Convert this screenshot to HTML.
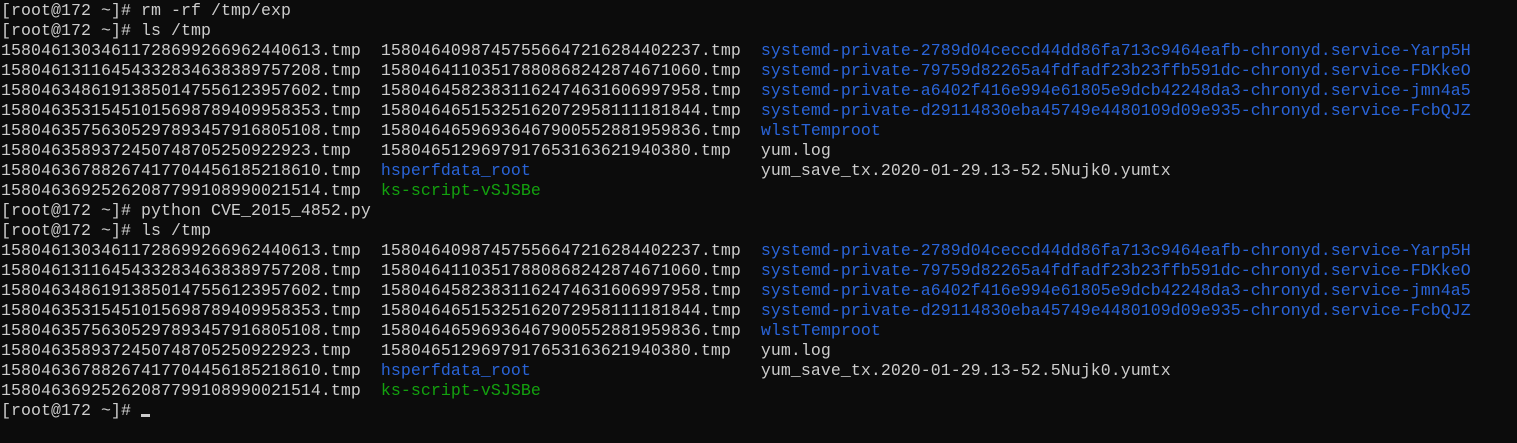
<!DOCTYPE html>
<html><head><meta charset="utf-8"><style>
html,body{margin:0;padding:0;background:#0c0c0c;width:1517px;height:443px;overflow:hidden}
pre{margin:0;position:absolute;left:1px;top:1px;font-family:"Liberation Mono",monospace;font-size:16.6px;line-height:20px;color:#cccccc;letter-spacing:0.04px}
.b{color:#2a64d8}.g{color:#13a10e}
.c{display:inline-block;width:9px;height:3px;background:#ccc;vertical-align:baseline;margin-bottom:-2px}
</style></head><body><pre>[root@172 ~]# rm -rf /tmp/exp
[root@172 ~]# ls /tmp
15804613034611728699266962440613.tmp  15804640987457556647216284402237.tmp  <span class="b">systemd-private-2789d04ceccd44dd86fa713c9464eafb-chronyd.service-Yarp5H</span>
15804613116454332834638389757208.tmp  15804641103517880868242874671060.tmp  <span class="b">systemd-private-79759d82265a4fdfadf23b23ffb591dc-chronyd.service-FDKkeO</span>
15804634861913850147556123957602.tmp  15804645823831162474631606997958.tmp  <span class="b">systemd-private-a6402f416e994e61805e9dcb42248da3-chronyd.service-jmn4a5</span>
15804635315451015698789409958353.tmp  15804646515325162072958111181844.tmp  <span class="b">systemd-private-d29114830eba45749e4480109d09e935-chronyd.service-FcbQJZ</span>
15804635756305297893457916805108.tmp  15804646596936467900552881959836.tmp  <span class="b">wlstTemproot</span>
1580463589372450748705250922923.tmp   1580465129697917653163621940380.tmp   yum.log
15804636788267417704456185218610.tmp  <span class="b">hsperfdata_root</span>                       yum_save_tx.2020-01-29.13-52.5Nujk0.yumtx
15804636925262087799108990021514.tmp  <span class="g">ks-script-vSJSBe</span>
[root@172 ~]# python CVE_2015_4852.py
[root@172 ~]# ls /tmp
15804613034611728699266962440613.tmp  15804640987457556647216284402237.tmp  <span class="b">systemd-private-2789d04ceccd44dd86fa713c9464eafb-chronyd.service-Yarp5H</span>
15804613116454332834638389757208.tmp  15804641103517880868242874671060.tmp  <span class="b">systemd-private-79759d82265a4fdfadf23b23ffb591dc-chronyd.service-FDKkeO</span>
15804634861913850147556123957602.tmp  15804645823831162474631606997958.tmp  <span class="b">systemd-private-a6402f416e994e61805e9dcb42248da3-chronyd.service-jmn4a5</span>
15804635315451015698789409958353.tmp  15804646515325162072958111181844.tmp  <span class="b">systemd-private-d29114830eba45749e4480109d09e935-chronyd.service-FcbQJZ</span>
15804635756305297893457916805108.tmp  15804646596936467900552881959836.tmp  <span class="b">wlstTemproot</span>
1580463589372450748705250922923.tmp   1580465129697917653163621940380.tmp   yum.log
15804636788267417704456185218610.tmp  <span class="b">hsperfdata_root</span>                       yum_save_tx.2020-01-29.13-52.5Nujk0.yumtx
15804636925262087799108990021514.tmp  <span class="g">ks-script-vSJSBe</span>
[root@172 ~]# <span class="c"></span></pre></body></html>
